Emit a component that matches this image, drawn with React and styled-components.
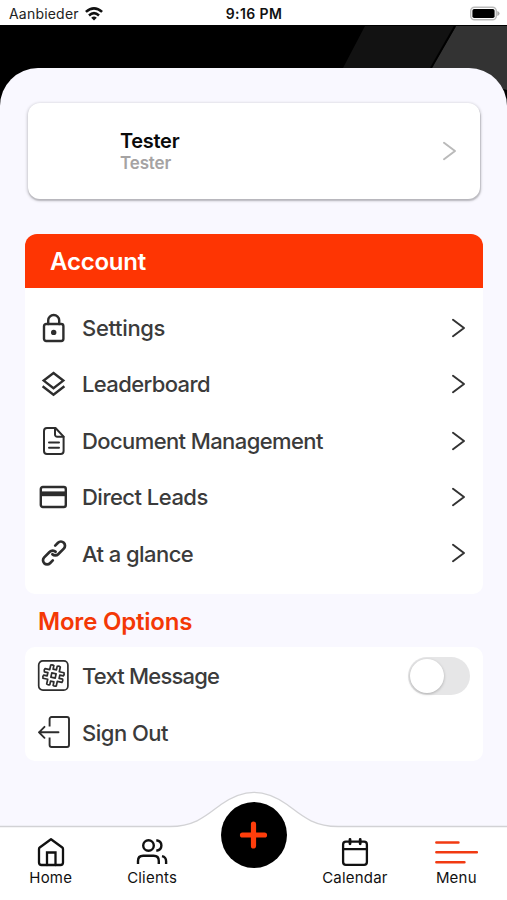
import React from "react";
import styled, { createGlobalStyle } from "styled-components";

const Global = createGlobalStyle`
  * { box-sizing: border-box; }
  body { margin: 0; background: #f9f8ff; font-family: Inter, "Liberation Sans", sans-serif; }
  svg { display: block; flex: none; overflow: visible; }
`;

const Screen = styled.div`
  width: 507px;
  height: 900px;
  display: flex;
  flex-direction: column;
  overflow: hidden;
  background: #f9f8ff;
`;

const StatusBar = styled.header`
  height: 25px;
  flex: none;
  display: grid;
  grid-template-columns: 1fr auto 1fr;
  align-items: center;
  padding: 2px 8px 0 9px;
  background: #fff;
  color: #222;
  font-size: 14px;
`;

const Carrier = styled.div`
  display: flex;
  align-items: center;
  gap: 6px;
  letter-spacing: 0.2px;
`;

const Clock = styled.div`
  font-weight: 600;
  font-size: 14px;
  letter-spacing: 0.4px;
  color: #111;
`;

const BatterySlot = styled.div`
  display: flex;
  justify-content: flex-end;
`;

const Banner = styled.div`
  height: 83px;
  flex: none;
  background: #000;
`;

const Sheet = styled.main`
  margin-top: -40px;
  flex: 1;
  padding: 35px 24.5px 0 25px;
  border-radius: 38px 38px 0 0;
  background: #f9f8ff;
`;

const ProfileCard = styled.section`
  height: 96px;
  margin: 0 3px;
  padding: 0 24px 0 92px;
  display: flex;
  align-items: center;
  justify-content: space-between;
  border-radius: 12px;
  background: #fff;
  box-shadow: 0 1px 3px 1px rgba(0, 0, 0, 0.18), 0.5px 2px 1px rgba(0, 0, 0, 0.12);
`;

const ProfileName = styled.div`
  font-weight: 600;
  font-size: 20px;
  line-height: 24px;
  letter-spacing: -0.3px;
  color: #0a0a0a;
`;

const ProfileRole = styled.div`
  font-weight: 600;
  font-size: 17px;
  line-height: 20px;
  letter-spacing: -0.15px;
  color: #a5a3a3;
`;

const AccountHeader = styled.h2`
  height: 54px;
  margin: 35px 0 0;
  padding: 0 25px;
  display: flex;
  align-items: center;
  border-radius: 12px 12px 0 0;
  background: #fe3503;
  color: #fff;
  font-size: 24px;
  font-weight: 600;
  letter-spacing: -0.2px;
`;

const List = styled.ul`
  list-style: none;
  margin: 0;
  padding: ${(p) => p.$padding};
  border-radius: ${(p) => (p.$rounded ? "10px" : "0 0 10px 10px")};
  background: #fff;
`;

const Row = styled.li`
  height: 56.3px;
  display: flex;
  align-items: center;
  padding: 0 17.5px 0 12px;
`;

const RowIcon = styled.span`
  width: 33px;
  margin-right: 12px;
  display: flex;
  justify-content: center;
  color: #2d2d2d;
`;

const RowLabel = styled.span`
  flex: 1;
  padding-top: ${(p) => p.$drop || 0}px;
  font-size: 22px;
  font-weight: 500;
  color: #3b3b3b;
  white-space: nowrap;
  letter-spacing: ${(p) => p.$track || 0}px;
`;

const SectionTitle = styled.h2`
  height: 53px;
  margin: 0;
  padding: 2px 13px 0;
  display: flex;
  align-items: center;
  color: #f43806;
  font-size: 24px;
  font-weight: 600;
  letter-spacing: -0.2px;
`;

const Toggle = styled.span`
  width: 62px;
  height: 38px;
  margin-right: -5px;
  padding: 2px;
  border-radius: 19px;
  background: #e6e6e7;
`;

const Knob = styled.span`
  display: block;
  width: 34px;
  height: 34px;
  border-radius: 50%;
  background: #fff;
  box-shadow: 0 1px 3px rgba(0, 0, 0, 0.25);
`;

const TabBar = styled.nav`
  position: relative;
  height: 74px;
  flex: none;
  display: grid;
  grid-template-columns: repeat(5, 1fr);
  background: #fff;
`;

const Hump = styled.svg`
  position: absolute;
  left: 0;
  top: -36px;
`;

const Tab = styled.a`
  position: relative;
  padding-top: 10px;
  display: flex;
  flex-direction: column;
  align-items: center;
  color: #111;
  font-size: 15px;
  line-height: 19px;
`;

const TabGlyph = styled.span`
  height: 32px;
  padding-bottom: 1px;
  display: flex;
  align-items: center;
`;

const TabText = styled.span`
  letter-spacing: 0.2px;
`;

const AddButton = styled.button`
  position: relative;
  justify-self: center;
  width: 66px;
  height: 66px;
  margin: -24px 0 0 0.6px;
  padding: 0;
  display: grid;
  place-items: center;
  border: 0;
  border-radius: 50%;
  background: #000;
`;

const stroke = {
  fill: "none",
  stroke: "currentColor",
  strokeLinecap: "round",
  strokeLinejoin: "round",
};

const Chevron = ({ color = "#333", width = 2 }) => (
  <svg width="12" height="20" viewBox="0 0 12 20" {...stroke} stroke={color} strokeWidth={width}>
    <path d="M0 1.8L11 10L0 18.2" />
  </svg>
);

const WifiIcon = () => (
  <svg width="18" height="14" viewBox="0 0 18 14" fill="none" stroke="#111" strokeWidth="2.6">
    <path d="M0.9 4.9Q9 -2.3 17.1 4.9M4 8.4Q9 4 14 8.4" />
    <path d="M9 13.5L6.2 10.7Q9 8.4 11.8 10.7Z" fill="#111" stroke="none" />
  </svg>
);

const BatteryIcon = () => (
  <svg width="29" height="14" viewBox="0 0 29 14">
    <rect x="0.7" y="0.2" width="25.6" height="12.6" rx="3.8" fill="#fff" stroke="#bbb" strokeWidth="1.4" />
    <rect x="2.4" y="1.9" width="22.2" height="9.2" rx="1.8" fill="#000" />
    <path d="M27.3 4Q29.6 4.9 29.6 6.5Q29.6 8.1 27.3 9Z" fill="#aaa" />
  </svg>
);

const LockIcon = () => (
  <svg width="22" height="28" viewBox="0 0 22 28" {...stroke} strokeWidth="2.4">
    <rect x="1" y="10" width="19.4" height="17" rx="2.2" />
    <path d="M5.2 10V6.3a5.5 5.3 0 0 1 11 0V10" />
    <circle cx="10.7" cy="18.4" r="2.7" fill="currentColor" stroke="none" />
  </svg>
);

const LayersIcon = () => (
  <svg width="24" height="26" viewBox="0 0 24 26" {...stroke} strokeWidth="2.4" strokeLinecap="butt" strokeLinejoin="miter">
    <path d="M11.5 2L21.3 9.6L11.5 17.2L1.7 9.6Z" />
    <path d="M0.6 15.2L11.5 23.7L22.4 15.2" />
  </svg>
);

const DocumentIcon = () => (
  <svg width="22" height="28" viewBox="0 0 22 28" {...stroke} strokeWidth="2">
    <path d="M12.5 1H4a3 3 0 0 0-3 3V24a3 3 0 0 0 3 3H17.6a3 3 0 0 0 3-3V9.6Z" />
    <path d="M12 1.2V7.6a2.2 2.2 0 0 0 2.2 2.2H20.5M6 15.6h10M6 20.8h10" />
  </svg>
);

const CardIcon = () => (
  <svg width="27" height="22" viewBox="0 0 27 22" {...stroke} strokeWidth="2.4">
    <rect x="0.8" y="1" width="25" height="20" rx="2" />
    <path d="M0.8 7.8h25" strokeWidth="4.8" strokeLinecap="butt" />
  </svg>
);

const LinkIcon = () => (
  <svg width="26" height="26" viewBox="0 0 26 26" {...stroke} strokeWidth="2.7">
    <path d="M14.2 5.6L17 2.8A4 4 0 0 1 22.8 8.6L17.2 14.2A4 4 0 0 1 11.4 14.2" />
    <path d="M11.8 20.4L9 23.2A4 4 0 0 1 3.2 17.4L8.8 11.8A4 4 0 0 1 14.6 11.8" />
  </svg>
);

const HashIcon = () => (
  <svg width="31" height="31" viewBox="0 0 31 31" {...stroke} strokeWidth="1.7">
    <rect x="0.7" y="0.9" width="29.2" height="29.2" rx="4.2" />
    <g transform="rotate(12 15.5 15.5)" strokeWidth="1.7">
      <path d="M10.6 5.8q1.8-1 3.2 0v3.6h3.4V5.8q1.8-1 3.2 0v4.8h4.8q1 1.8 0 3.2h-3.6v3.4h3.6q1 1.8 0 3.2h-4.8v4.8q-1.8 1-3.2 0v-3.6h-3.4v3.6q-1.8 1-3.2 0v-4.8H5.8q-1-1.8 0-3.2h3.6v-3.4H5.8q-1-1.8 0-3.2h4.8Z" />
      <rect x="13.3" y="13.3" width="4.4" height="4.4" />
    </g>
  </svg>
);

const SignOutIcon = () => (
  <svg width="32" height="32" viewBox="0 0 32 32" {...stroke} strokeWidth="1.9">
    <path d="M11.6 10.5V3a2 2 0 0 1 2-2H29a2 2 0 0 1 2 2V29a2 2 0 0 1-2 2H13.6a2 2 0 0 1-2-2V21.5" strokeLinecap="butt" />
    <path d="M20.5 16.3H1M6.5 10.8L1 16.3l5.5 5.5" />
  </svg>
);

const HomeIcon = () => (
  <svg width="26" height="28" viewBox="0 0 26 28" {...stroke} strokeWidth="2.3">
    <path d="M13 1.2L24.3 9.5Q25 10 25 11V24.5Q25 27 22.5 27H3.5Q1 27 1 24.5V11Q1 10 1.7 9.5Z" />
    <path d="M9 27V14.5h8.5V27" strokeLinejoin="miter" />
  </svg>
);

const ClientsIcon = () => (
  <svg width="30" height="26" viewBox="0 0 30 26" {...stroke} strokeWidth="2.4" strokeLinecap="butt">
    <circle cx="11.5" cy="6.5" r="5.3" />
    <path d="M1 25V22Q1 16.8 6.2 16.8H16.6Q21.8 16.8 21.8 22V25M19.3 1.3Q24.4 2 24.4 6.5Q24.4 11 19.3 11.8M25 17.2Q29.1 18.2 29.1 22.3V25" />
  </svg>
);

const CalendarIcon = () => (
  <svg width="26" height="28" viewBox="0 0 26 28" {...stroke} strokeWidth="2.3">
    <rect x="1.1" y="3.6" width="23.8" height="23.3" rx="2.8" />
    <path d="M1.1 11.2h23.8" />
    <path d="M8 1.5v4.3M18.2 1.5v4.3" strokeWidth="2.8" />
  </svg>
);

const MenuLines = () => (
  <svg width="43" height="24" viewBox="0 0 43 24" {...stroke} stroke="#f13a12" strokeWidth="2.6">
    <path d="M1.4 2.5h22M1.4 12.3h40.4M1.4 22.2h28" />
  </svg>
);

const accountItems = [
  { label: "Settings", icon: LockIcon, track: -0.33 },
  { label: "Leaderboard", icon: LayersIcon, track: -0.62 },
  { label: "Document Management", icon: DocumentIcon, track: -0.6 },
  { label: "Direct Leads", icon: CardIcon, track: -0.52 },
  { label: "At a glance", icon: LinkIcon, track: -0.56, drop: 1 },
];

const NavTab = ({ icon: Icon, label }) => (
  <Tab>
    <TabGlyph><Icon /></TabGlyph>
    <TabText>{label}</TabText>
  </Tab>
);

export default function App() {
  return (
    <>
      <Global />
      <Screen>
        <StatusBar>
          <Carrier>Aanbieder <WifiIcon /></Carrier>
          <Clock>9:16 PM</Clock>
          <BatterySlot><BatteryIcon /></BatterySlot>
        </StatusBar>
        <Banner>
          <svg width="507" height="83" viewBox="0 0 507 83">
            <path d="M365 1H456L431 43V60H343V43Z" fill="#121212" />
            <path d="M456 1H507V65L431 44Z" fill="#333" />
            <path d="M455 1L431 43" stroke="#000" strokeWidth="2" />
          </svg>
        </Banner>
        <Sheet>
          <ProfileCard>
            <div>
              <ProfileName>Tester</ProfileName>
              <ProfileRole>Tester</ProfileRole>
            </div>
            <Chevron color="#bababa" />
          </ProfileCard>
          <AccountHeader>Account</AccountHeader>
          <List $padding="12px 0 12.5px">
            {accountItems.map(({ label, icon: Icon, track, drop }) => (
              <Row key={label}>
                <RowIcon><Icon /></RowIcon>
                <RowLabel $track={track} $drop={drop}>{label}</RowLabel>
                <Chevron />
              </Row>
            ))}
          </List>
          <SectionTitle>More Options</SectionTitle>
          <List $rounded $padding="0.7px 0">
            <Row>
              <RowIcon><HashIcon /></RowIcon>
              <RowLabel $track={-0.8}>Text Message</RowLabel>
              <Toggle role="switch" aria-checked="false"><Knob /></Toggle>
            </Row>
            <Row>
              <RowIcon><SignOutIcon /></RowIcon>
              <RowLabel $track={-0.5} $drop={1}>Sign Out</RowLabel>
            </Row>
          </List>
        </Sheet>
        <TabBar>
          <Hump width="507" height="40" viewBox="0 0 507 40">
            <path
              d="M-2 36.5H170C196 36.5 208 24 221 14.5C233 6 243 2.3 254 2.3C265 2.3 275 6 287 14.5C300 24 312 36.5 338 36.5H509V42H-2Z"
              fill="#fff"
            />
            <path
              d="M-2 36.5H170C196 36.5 208 24 221 14.5C233 6 243 2.3 254 2.3C265 2.3 275 6 287 14.5C300 24 312 36.5 338 36.5H509"
              fill="none"
              stroke="#d2d2d5"
              strokeWidth="1.3"
            />
          </Hump>
          <NavTab icon={HomeIcon} label="Home" />
          <NavTab icon={ClientsIcon} label="Clients" />
          <AddButton aria-label="Add">
            <svg width="28" height="28" viewBox="0 0 28 28" stroke="#fe3d0b" strokeWidth="5.2" strokeLinecap="round">
              <path d="M13.5 3v22M2.5 14h22" />
            </svg>
          </AddButton>
          <NavTab icon={CalendarIcon} label="Calendar" />
          <NavTab icon={MenuLines} label="Menu" />
        </TabBar>
      </Screen>
    </>
  );
}
